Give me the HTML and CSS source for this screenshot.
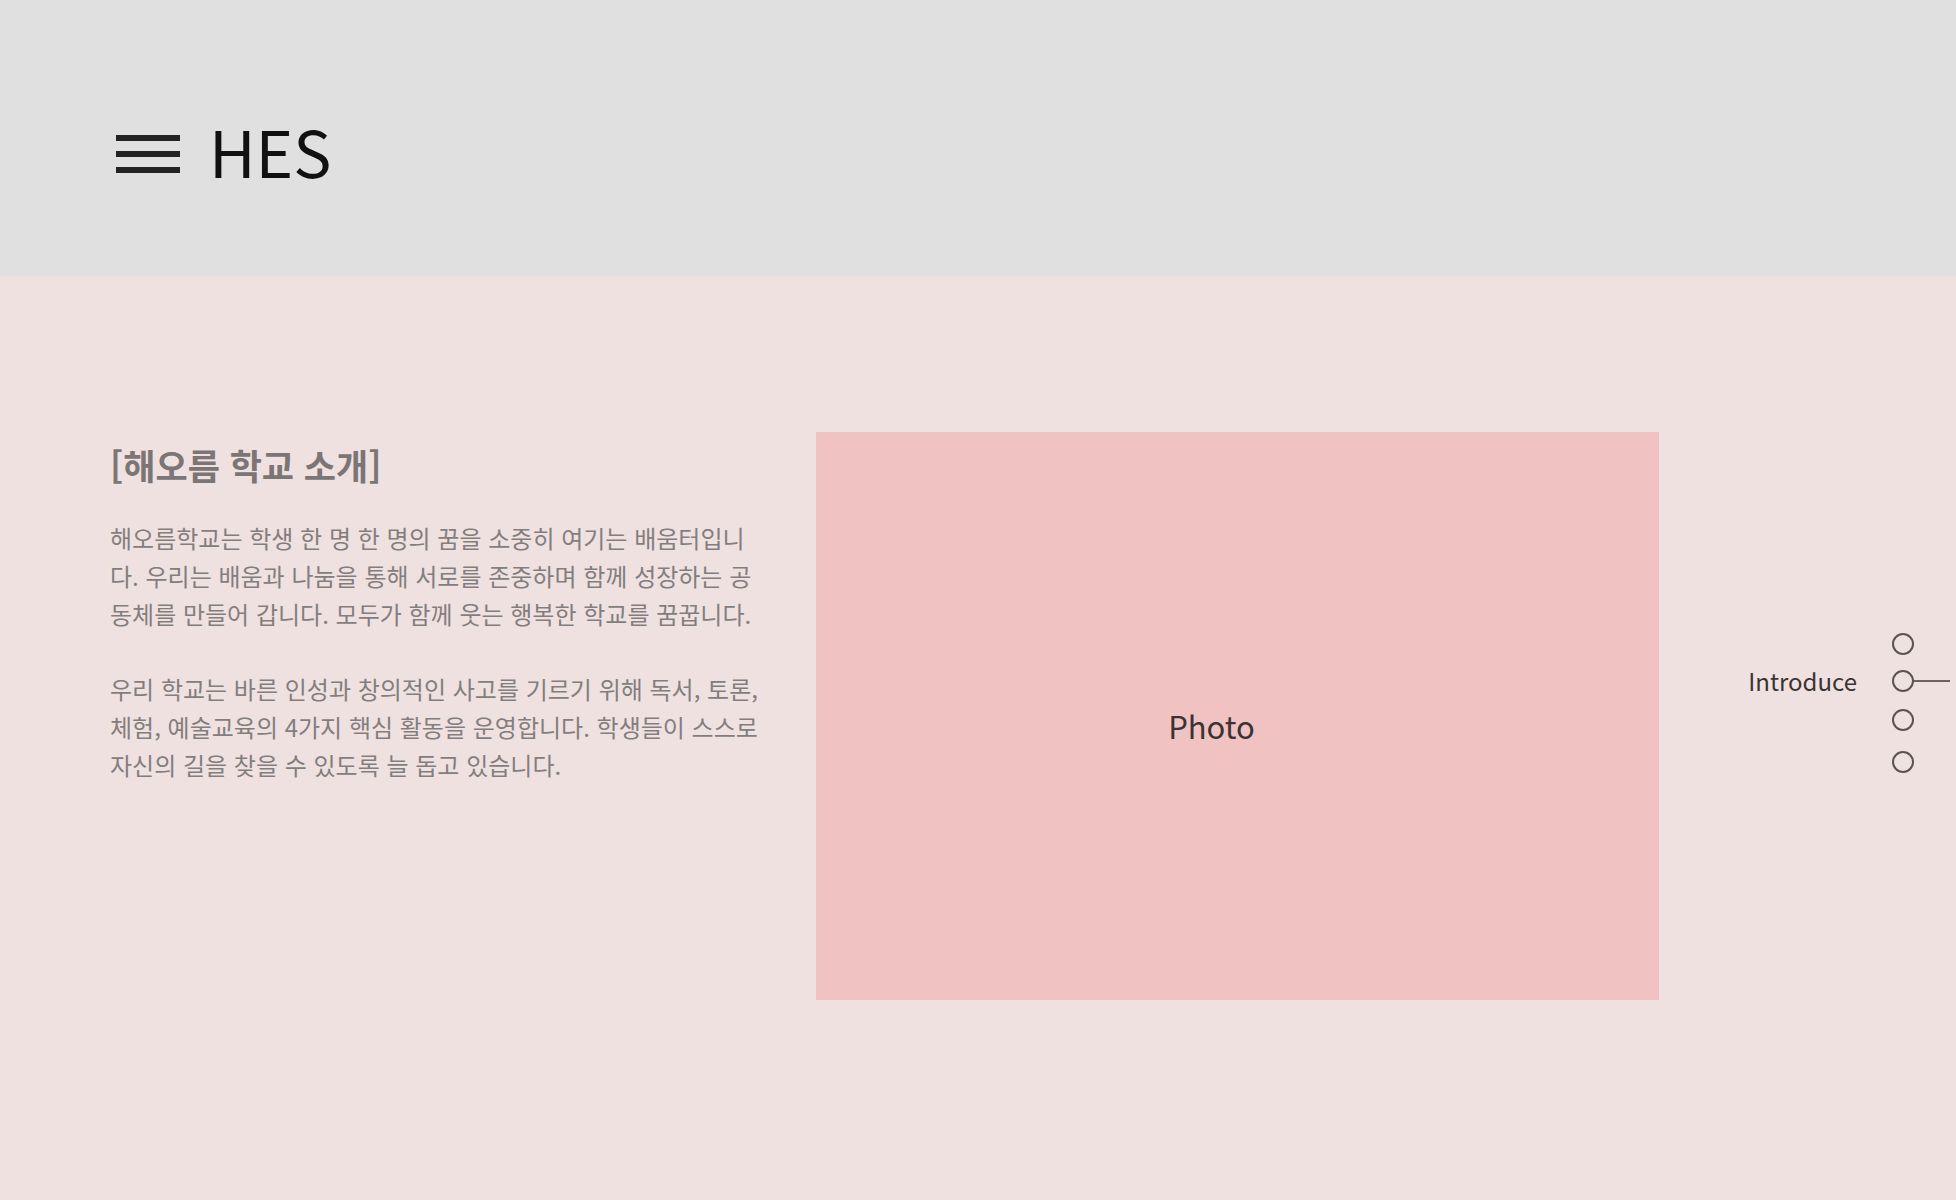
FILE: index.html
```html
<!DOCTYPE html>
<html lang="ko">
<head>
<meta charset="utf-8">
<title>HES</title>
<link rel="stylesheet" href="styles.css">
</head>
<body>
<header class="top">
  <button class="menu" type="button" aria-label="menu"><span></span><span></span><span></span></button>
  <h1 class="logo">HES</h1>
</header>
<main class="intro">
  <section class="about">
    <h2 class="about-title">[해오름 학교 소개]</h2>
    <p>해오름학교는 학생 한 명 한 명의 꿈을 소중히 여기는 배움터입니다. 우리는 배움과 나눔을 통해 서로를 존중하며 함께 성장하는 공동체를 만들어 갑니다. 모두가 함께 웃는 행복한 학교를 꿈꿉니다.</p>
    <p>우리 학교는 바른 인성과 창의적인 사고를 기르기 위해 독서, 토론, 체험, 예술교육의 4가지 핵심 활동을 운영합니다. 학생들이 스스로 자신의 길을 찾을 수 있도록 늘 돕고 있습니다.</p>
  </section>
  <div class="photo"><span>Photo</span></div>
  <nav class="pager">
    <ul>
      <li><span class="dot"></span></li>
      <li class="active"><span class="label">Introduce</span><span class="dot"></span><span class="bar"></span></li>
      <li><span class="dot"></span></li>
      <li><span class="dot"></span></li>
    </ul>
  </nav>
</main>
</body>
</html>
```
FILE: styles.css
```css
html, body {
  margin: 0;
  padding: 0;
}
body {
  background: #efe1e0;
  font-family: "Noto Sans CJK KR", "Noto Sans", sans-serif;
  width: 1956px;
  height: 1200px;
  overflow: hidden;
}
.top {
  box-sizing: border-box;
  height: 276px;
  background: #e0e0e0;
  display: flex;
  align-items: center;
  padding: 32px 0 0 116px;
}
.menu {
  width: 64px;
  padding: 0;
  margin: 0;
  border: 0;
  background: none;
  display: flex;
  flex-direction: column;
  gap: 10px;
}
.menu span {
  display: block;
  height: 6px;
  background: #232323;
}
.logo {
  margin: 0 0 0 29px;
  padding-bottom: 9px;
  font-size: 64px;
  font-weight: 400;
  line-height: 1;
  color: #111;
}
.intro {
  display: flex;
  align-items: flex-start;
  padding-top: 156px;
}
.about {
  width: 660px;
  margin-left: 110px;
  padding-top: 9px;
}
.about-title {
  margin: 0 0 30px;
  font-size: 35px;
  line-height: 48px;
  font-weight: 700;
  color: #7b7575;
}
.about p {
  margin: 0 0 37px;
  font-size: 24px;
  line-height: 38px;
  color: #837e7e;
}
.photo {
  box-sizing: border-box;
  width: 843px;
  height: 568px;
  margin-left: 46px;
  background: #f0c2c2;
  display: flex;
  align-items: center;
  justify-content: center;
  padding: 19px 52px 0 0;
  font-size: 31px;
  color: #3b3232;
}
.pager {
  margin-left: auto;
  margin-right: 6px;
  margin-top: 201px;
}
.pager ul {
  list-style: none;
  margin: 0;
  padding: 0;
  display: flex;
  flex-direction: column;
}
.pager li {
  display: grid;
  grid-template-columns: auto 22px 36px;
  justify-content: end;
  align-items: center;
  height: 22px;
}
.pager li:nth-child(2) { margin-top: 15px; }
.pager li:nth-child(3) { margin-top: 17px; }
.pager li:nth-child(4) { margin-top: 20px; }
.dot {
  grid-column: 2;
  box-sizing: border-box;
  width: 22px;
  height: 22px;
  border: 2px solid #5b5353;
  border-radius: 50%;
}
.label {
  grid-column: 1;
  padding-right: 35px;
  font-size: 24px;
  line-height: 22px;
  color: #3a3333;
}
.bar {
  grid-column: 3;
  height: 2px;
  background: #6b6262;
}
```
